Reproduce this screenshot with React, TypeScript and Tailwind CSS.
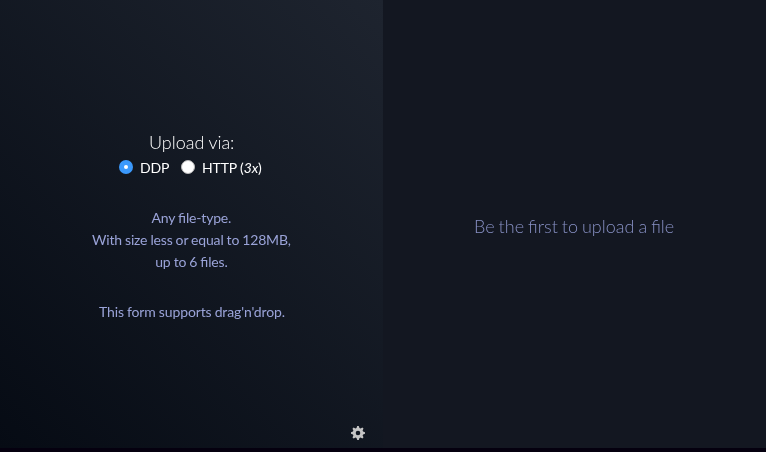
function Gear() {
  return (
    <svg viewBox="0 1 14 14" className="size-[14px]" fill="#c4c4c4">
      <path
        fillRule="evenodd"
        d="M14 8.77v-1.6l-1.94-.64-.45-1.09.88-1.84-1.13-1.13-1.81.91-1.09-.45-.69-1.92h-1.6l-.63 1.94-1.11.45-1.84-.88-1.13 1.13.91 1.81-.45 1.09L0 7.23v1.59l1.94.64.45 1.09-.88 1.84 1.13 1.13 1.81-.91 1.09.45.69 1.92h1.59l.63-1.94 1.11-.45 1.84.88 1.13-1.13-.92-1.81.47-1.09L14 8.77zM7 10.3a2.3 2.3 0 1 1 0-4.6 2.3 2.3 0 0 1 0 4.6z"
      />
    </svg>
  );
}

function Radio({ checked }: { checked?: boolean }) {
  return (
    <span
      className={
        checked
          ? "flex size-[14px] items-center justify-center rounded-full bg-[#3b99fc]"
          : "flex size-[14px] items-center justify-center rounded-full border border-[#b8b8b8] bg-white"
      }
    >
      {checked && <span className="size-[4px] rounded-full bg-white" />}
    </span>
  );
}

export default function App() {
  return (
    <div className="flex h-[452px] w-[766px] flex-col bg-[#05000f] font-['Lato',sans-serif] text-[14px] leading-[22px]">
      <div className="flex h-[448px]">
        <section className="flex w-[383px] flex-col items-center bg-linear-[45deg,#060b14,#1e242f] pt-[130px] text-[#9aa3d8]">
          <h1 className="h-[27px] text-[18px] leading-[24px] font-light text-white will-change-transform [word-spacing:-0.5px]">
            Upload via:
          </h1>
          <div className="flex h-[22px] w-[145px] items-center text-white will-change-transform">
            <div className="mb-[2px]">
              <Radio checked />
            </div>
            <span className="ml-[7px] w-[29px] tracking-[-0.2px]">DDP</span>
            <div className="mb-[2px] ml-[12px]">
              <Radio />
            </div>
            <span className="ml-[7px] tracking-[-0.15px] whitespace-nowrap">
              HTTP (<em>3x</em>)
            </span>
          </div>
          <p className="mt-[28px] text-center tracking-[-0.18px] will-change-transform [font-feature-settings:'liga'] [word-spacing:-0.3px]">
            Any file-type.
            <br />
            With size less or equal to 128MB,
            <br />
            up to 6 files.
          </p>
          <p className="mt-[28px] text-center tracking-[-0.13px] will-change-transform [word-spacing:-0.3px]">
            This form supports drag'n'drop.
          </p>
          <div className="mt-auto mr-[18px] mb-[8px] self-end">
            <Gear />
          </div>
        </section>
        <section className="flex flex-1 justify-center bg-[#131721] pt-[214px] text-[18px] leading-[24px] font-light text-[#8790c4]">
          <p className="h-[24px] will-change-transform [word-spacing:-0.9px]">Be the first to upload a file</p>
        </section>
      </div>
    </div>
  );
}
